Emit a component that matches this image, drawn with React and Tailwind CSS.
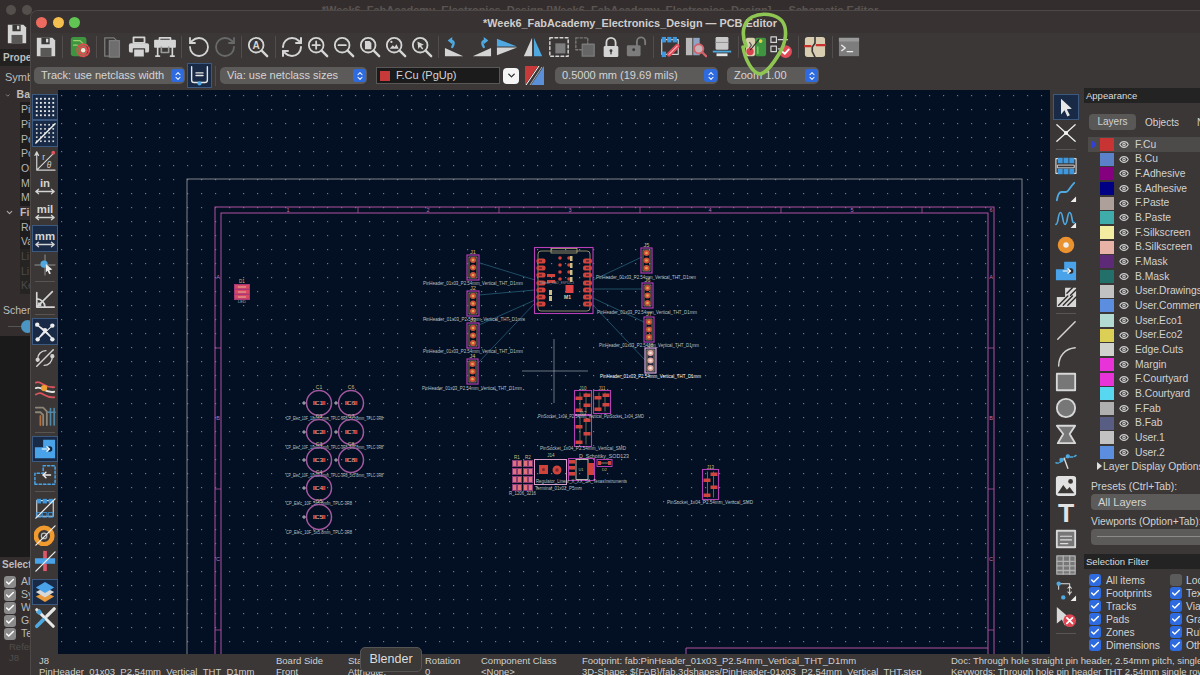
import React from 'react';
import { RotateCcw, RotateCw, RefreshCw, ChevronsUpDown, ChevronDown, Check, Eye } from 'lucide-react';

const G = '#d4d4d4';
const BLUE = '#4fa9e0';
const PINK = '#b0529f';

const Svg = ({ children, size = 22, sw = 2, stroke = G }) => (
  <svg width={size} height={size} viewBox="0 0 24 24" fill="none" stroke={stroke} strokeWidth={sw} strokeLinecap="round" strokeLinejoin="round">{children}</svg>
);

const Lens = ({ children }) => (
  <Svg>
    <circle cx="10" cy="10" r="8" />
    <path d="M16 16l6 6" strokeWidth="2.6" />
    {children}
  </Svg>
);

const topIcons = {
  save: <Svg stroke="none"><path d="M2 2h17l3 3v17H2z" fill={G} /><rect x="7" y="2" width="9" height="7" fill="#3b3938" /><rect x="12" y="3" width="2.5" height="4" fill={G} /><rect x="6" y="13" width="12" height="9" fill="#5a5856" /></Svg>,
  setup: <Svg stroke="none"><rect x="2" y="1" width="17" height="21" rx="3" fill="#3f9440" /><path d="M5 5h7l3 3M5 10h4" stroke="#9bd06a" strokeWidth="1.4" /><circle cx="15.5" cy="15.5" r="6.6" stroke="#e24b52" strokeWidth="2" strokeDasharray="2.2 1.9" /><circle cx="15.5" cy="15.5" r="4" stroke="#e24b52" strokeWidth="2.2" /><circle cx="15.5" cy="15.5" r="2.4" fill="#f6e8dc" /></Svg>,
  page: <Svg stroke="#7c7c7c" sw={1.4}><path d="M3 2h10l3 3v17H3z" /><path d="M8 5h11v18H8z" fill="#6e6e6e" /></Svg>,
  print: <Svg stroke="none"><rect x="6" y="1.5" width="12" height="6" fill="none" stroke={G} strokeWidth="2" /><rect x="1" y="8" width="22" height="10" rx="2" fill={G} /><rect x="6" y="14" width="12" height="9" fill={G} stroke="#3b3938" strokeWidth="1.5" /></Svg>,
  plot: <Svg sw={1.8}><rect x="1" y="5" width="22" height="7" fill={G} /><path d="M6 5V2h12v3" /><path d="M4 12v10M20 12v10M2 22h4M18 22h4" /><path d="M8 12v6h8v-6" stroke="#9a9a9a" /></Svg>,
  undo: <RotateCcw size={24} color={G} strokeWidth={1.8} />,
  redo: <RotateCw size={24} color="#696969" strokeWidth={1.8} />,
  find: <Lens><text x="10" y="14" fontSize="11" fontWeight="700" textAnchor="middle" fill={G} stroke="none" fontFamily="Liberation Sans">A</text></Lens>,
  refresh: <RefreshCw size={24} color={G} strokeWidth={2} />,
  zin: <Lens><path d="M10 6v8M6 10h8" /></Lens>,
  zout: <Lens><path d="M6 10h8" /></Lens>,
  zfit: <Lens><path d="M6.5 5.5h5l2 2v7h-7z" fill={G} stroke="none" /></Lens>,
  zobj: <Lens><path d="M5 14l3.5-4 2 2 2-3 2.5 5z" fill={G} stroke="none" /><circle cx="7" cy="6.5" r="1.2" fill={G} stroke="none" /></Lens>,
  zsel: <Lens><path d="M7 6l7 3.5-3 1.2 2.4 3-1.2 1-2.4-3-1.8 2.4z" fill={G} stroke="none" /></Lens>,
  flipl: <Svg stroke="none"><path d="M1 22V13l20 9z" fill={G} /><path d="M9 12c3-5 1-7-2-7" stroke={BLUE} strokeWidth="2.6" /><path d="M9 1L4 5l5 4z" fill={BLUE} /></Svg>,
  flipr: <Svg stroke="none"><path d="M23 22V13L3 22z" fill={G} /><path d="M15 12c-3-5-1-7 2-7" stroke={BLUE} strokeWidth="2.6" /><path d="M15 1l5 4-5 4z" fill={BLUE} /></Svg>,
  mirh: <Svg stroke="none"><path d="M1 3l22 8.5H1z" fill={BLUE} /><path d="M1 21l22-8.5H1z" fill={G} /></Svg>,
  mirv: <Svg stroke="none"><path d="M11 2L2 22h9z" fill={G} /><path d="M13 2l9 20h-9z" fill={BLUE} /></Svg>,
  group: <Svg sw={1.6}><rect x="2" y="2" width="20" height="20" strokeDasharray="3 2.6" /><rect x="8" y="8" width="11" height="11" fill="#7e7e7e" stroke="none" /></Svg>,
  ungroup: <Svg stroke="#7a7a7a" sw={1.5}><rect x="2" y="2" width="13" height="13" strokeDasharray="2.6 2" /><rect x="9" y="9" width="13" height="13" fill="#666" /></Svg>,
  lock: <Svg stroke="none"><path d="M7 11V7a5 5 0 0 1 10 0v4" stroke={G} strokeWidth="2" /><rect x="4" y="11" width="16" height="12" rx="1.5" fill={G} /><circle cx="12" cy="16" r="1.6" fill="#3b3938" /><rect x="11.3" y="16" width="1.4" height="4" fill="#3b3938" /></Svg>,
  unlock: <Svg stroke="none"><path d="M13 10V6a4.5 4.5 0 0 1 9 0v3" stroke="#7c7c7c" strokeWidth="2" /><rect x="2" y="10" width="15" height="12" rx="1.5" fill="#7c7c7c" /><circle cx="9.5" cy="15" r="1.6" fill="#3b3938" /></Svg>,
  fpedit: <Svg stroke="none"><path d="M3 4v16h18V4z" fill="none" stroke={G} strokeWidth="1.3" /><g fill="#3f97dd"><rect x="3" y="1" width="4.6" height="6" /><rect x="9" y="1" width="4.6" height="6" /><rect x="15" y="1" width="4.6" height="6" /><rect x="3" y="17" width="4.6" height="6" /></g><path d="M11 20l9-9" stroke="#e34d5b" strokeWidth="5" /><path d="M11 20l9-9" stroke="#fff" strokeWidth="1" /></Svg>,
  net: <Svg stroke="none"><rect x="1" y="2" width="7" height="19" fill="#b9b9b9" /><rect x="9" y="2" width="7" height="19" fill="#8fa4c4" /><circle cx="15" cy="14" r="5" fill="#c8b4b8" stroke="#d0636b" strokeWidth="2" /><path d="M19 18l4 4" stroke="#d0636b" strokeWidth="2.6" /></Svg>,
  stack: <Svg stroke="none"><rect x="5" y="1" width="14" height="14" rx="1.5" fill="#c9c9c9" /><path d="M5 7h14" stroke="#8c8c8c" strokeWidth="1" /><rect x="2" y="16" width="20" height="2" fill={BLUE} /><rect x="6" y="19" width="12" height="3" fill="#e5e5e5" /></Svg>,
  update: <Svg stroke="none"><rect x="1" y="2" width="10" height="20" rx="2" fill="#d8cfae" /><rect x="11" y="2" width="12" height="20" rx="2" fill="#3f9440" /><circle cx="17" cy="5.5" r="2" fill="#e6cf4a" /><path d="M14 12v7" stroke="#8ccf62" strokeWidth="1.4" /><circle cx="5.5" cy="17" r="4" fill="#d9434e" /><path d="M6 15L15 4" stroke="#2b2b2b" strokeWidth="1.2" /><path d="M5 7l2 3-2 3" stroke="#555" strokeWidth="1.2" /></Svg>,
  drc: <Svg stroke="none"><rect x="1" y="1" width="6" height="6" fill="none" stroke={G} strokeWidth="1.3" /><path d="M9 4h10" stroke={G} strokeWidth="1.4" /><rect x="1" y="11" width="6" height="6" fill="none" stroke={G} strokeWidth="1.3" /><path d="M9 14h3" stroke={G} strokeWidth="1.4" /><circle cx="17" cy="17" r="7" fill="#e14b59" /><path d="M13.5 17l2.6 2.6 4.4-5" stroke="#fff" strokeWidth="2" /></Svg>,
  route: <Svg stroke="none"><rect x="1" y="1" width="22" height="22" rx="3" fill="#d8cdb0" /><path d="M12 1v7l-3 4v5l3 6" stroke="#3b3938" strokeWidth="1.8" /><path d="M14 10h9M1 11h6" stroke="#c8322e" strokeWidth="2.6" /></Svg>,
  term: <Svg stroke="none"><rect x="1" y="2" width="22" height="20" fill="#7d7d7d" /><rect x="1" y="2" width="22" height="4" fill="#9a9a9a" /><path d="M4 10l4 3-4 3M10 17h6" stroke="#eee" strokeWidth="1.4" /></Svg>,
};

const topBar = ['save', '|', 'setup', '|', 'page', 'print', 'plot', '|', 'undo', 'redo', '|', 'find', '|', 'refresh', 'zin', 'zout', 'zfit', 'zobj', 'zsel', '|', 'flipl', 'flipr', 'mirh', 'mirv', 'group', 'ungroup', 'lock', 'unlock', '|', 'fpedit', 'net', 'stack', '|', 'update', 'drc', '|', 'route', '|', 'term'];

const Unit = ({ t }) => (
  <Svg stroke="none">
    <text x="12" y="13" fontSize="12.5" fontWeight="700" textAnchor="middle" fill={G} fontFamily="Liberation Sans">{t}</text>
    <path d="M2 18h20M2 18l3-2.4M2 18l3 2.4M22 18l-3-2.4M22 18l-3 2.4" stroke={G} strokeWidth="1.4" />
  </Svg>
);

const dots = [];
for (let i = 0; i < 5; i++) for (let j = 0; j < 5; j++) dots.push([3 + i * 4.5, 3 + j * 4.5]);

const leftIcons = {
  grid: <Svg stroke="none">{dots.map(([x, y]) => <rect key={x + '-' + y} x={x - 1} y={y - 1} width="2" height="2" fill="#eee" />)}</Svg>,
  gridov: <Svg stroke="none">{dots.map(([x, y]) => <rect key={x + '-' + y} x={x - 0.9} y={y - 0.9} width="1.8" height="1.8" fill="#ddd" />)}<path d="M2 23L23 2" stroke="#eee" strokeWidth="1.6" /></Svg>,
  polar: <Svg stroke="none"><path d="M3 23V4M1 7l2-4 2 4M3 23L21 5M3 23h20" stroke={G} strokeWidth="1.3" /><circle cx="21" cy="4" r="2" fill="#e25560" /><text x="9" y="12" fontSize="9" fill={G} fontFamily="Liberation Sans">r</text><text x="14" y="21" fontSize="9" fontStyle="italic" fill={G} fontFamily="Liberation Sans">θ</text></Svg>,
  inch: <Unit t="in" />,
  mil: <Unit t="mil" />,
  mm: <Unit t="mm" />,
  cursor: <Svg stroke="none"><path d="M1 12h22M12 1v22" stroke="#9a9a9a" strokeWidth="1" /><circle cx="11" cy="11" r="4" fill={BLUE} /><path d="M13 11l7 6-3.4.6 1.8 3.6-1.8.8-1.8-3.6L13 20z" fill="#eee" /></Svg>,
  angle: <Svg sw={1.8}><path d="M3 22V6M3 22h19M3 22L20 5" /><path d="M3 13a9 9 0 0 1 9 9" /><rect x="4" y="17" width="4" height="4" fill={G} stroke="none" /></Svg>,
  rats: <Svg sw={1.2} stroke="#eee"><path d="M3 4l18 16M4 20L20 5M3 4l9 6 9 10M4 20l8-10" /><g fill="#eee" stroke="none"><circle cx="3.5" cy="4" r="2.4" /><circle cx="12" cy="10" r="2.4" /><circle cx="20" cy="5" r="2.4" /><circle cx="4" cy="20" r="2.4" /><circle cx="20" cy="20" r="2.4" /></g></Svg>,
  curved: <Svg sw={1.5}><path d="M3 21L21 3" /><path d="M4 13c0-5 4-9 9-9M20 11c0 5-4 9-9 9" /><circle cx="4" cy="14" r="1.6" fill={G} /><circle cx="20" cy="10" r="1.6" fill={G} /></Svg>,
  tracks: <Svg stroke="none"><path d="M2 5c6-3 8 6 20 5M2 18c8-5 8 4 20 3" stroke="#d9545c" strokeWidth="2" /><path d="M2 11c7-3 9 6 20 4" stroke="#e4e4e4" strokeWidth="2" /><circle cx="11" cy="11" r="3.4" fill="#f0a030" /></Svg>,
  hidden: <Svg stroke="none"><path d="M2 4h8l4 4v15M2 9h5l3 3v11" stroke="#8d8478" strokeWidth="2" /><path d="M7 23V13" stroke="#b07040" strokeWidth="2" /><path d="M15 9h8M18 5v18M22 5v18" stroke="#4f88a8" strokeWidth="1.8" /></Svg>,
  pad: <Svg stroke="none"><path d="M1 22V10h9V2h13v20z" fill="#4aa3e8" /><circle cx="17" cy="12" r="3" fill="#10243f" /><path d="M9 12h8l-3-2.4M17 12l-3 2.4" stroke="#fff" strokeWidth="1.3" /></Svg>,
  padout: <Svg sw={1.6} stroke="#4aa3e8"><path d="M1 22V10h9V2h13v20z" strokeDasharray="2.6 2.2" /><path d="M10 12h8" stroke="#eee" /><path d="M13 9l-3 3 3 3" stroke="#eee" /></Svg>,
  fpoff: <Svg stroke="none"><path d="M3 4v17h18V4z" fill="none" stroke="#ddd" strokeWidth="1.2" /><g fill="#3f97dd"><rect x="3" y="2" width="4.6" height="5" /><rect x="9.5" y="2" width="4.6" height="5" /><rect x="16" y="2" width="4.6" height="5" /></g><g fill="none" stroke="#3f97dd" strokeWidth="1"><rect x="3" y="17" width="4.6" height="5" /><rect x="9.5" y="17" width="4.6" height="5" /><rect x="16" y="17" width="4.6" height="5" /></g><path d="M2 23L23 2" stroke="#eee" strokeWidth="1.4" /></Svg>,
  viaoff: <Svg stroke="none"><circle cx="11" cy="13" r="9" stroke="#f09a30" strokeWidth="5" /><circle cx="11" cy="13" r="3" stroke="#b9b9b9" strokeWidth="1.3" /><path d="M2 23L23 2" stroke="#eee" strokeWidth="1.4" /></Svg>,
  zoneoff: <Svg stroke="none"><rect x="10" y="1" width="4" height="22" fill="#e0566a" /><rect x="1" y="9" width="22" height="6" fill="#4aa3e8" /><path d="M2 23L23 2" stroke="#eee" strokeWidth="1.4" /></Svg>,
  layers: <Svg stroke="none"><path d="M12 12l10 5-10 6-10-6z" fill="#e89a3c" /><path d="M12 7l10 5-10 6-10-6z" fill="#d8d8d8" /><path d="M12 1l10 6-10 6L2 7z" fill="#4aa3e8" /></Svg>,
  tools: <Svg stroke="none"><path d="M3 3l18 18" stroke="#e8e8e8" strokeWidth="3.4" /><path d="M22 2l-8 8" stroke="#e8e8e8" strokeWidth="3.6" /><path d="M10 14l-7 7" stroke={BLUE} strokeWidth="4" /><path d="M2 6l4-4 3 4-3 3z" fill={BLUE} /></Svg>,
};

const leftBar = [['grid', 1], ['gridov', 1], ['polar'], ['inch'], ['mil'], ['mm', 1], ['cursor'], '|', ['angle'], '|', ['rats', 1], ['curved'], '-', ['tracks'], ['hidden'], '|', ['pad', 1], ['padout'], '|', ['fpoff'], ['viaoff'], ['zoneoff'], '-', ['layers', 1], ['tools']];

const Corner = () => <path d="M23 23v-6l-6 6z" fill="#eee" stroke="none" />;

const rightIcons = {
  arrow: <Svg stroke="none" size={20}><path d="M6 2l13 12-6 .6 3.6 7.4-3 1.4-3.4-7.4L6 21z" fill="#e6e6e6" /></Svg>,
  cross: <Svg sw={1.4} stroke="#eee"><path d="M2 3l20 18M22 3L2 21" /><circle cx="12" cy="12" r="1.6" fill="#fff" /></Svg>,
  fp: <Svg stroke="none"><path d="M3 4H1v16h2M21 4h2v16h-2" fill="none" stroke="#ddd" strokeWidth="1.2" /><path d="M3 11h18v3H3z" fill="none" stroke="#ddd" strokeWidth="1" /><g fill="#3f97dd"><rect x="3" y="3" width="5.4" height="6" /><rect x="9.3" y="3" width="5.4" height="6" /><rect x="15.6" y="3" width="5.4" height="6" /><rect x="3" y="15" width="5.4" height="6" /><rect x="9.3" y="15" width="5.4" height="6" /><rect x="15.6" y="15" width="5.4" height="6" /></g></Svg>,
  route: <Svg stroke={BLUE} sw={2}><path d="M2 21c1-6 2-9 5-9h5c3 0 3-4 9-10" /><Corner /></Svg>,
  tune: <Svg stroke={BLUE} sw={1.8}><path d="M1 19c3 0 2-13 5-13s2 13 5 13 2-13 5-13 2 13 5 11" /><Corner /></Svg>,
  via: <Svg stroke="none"><circle cx="12" cy="12" r="9" fill="#ea9130" /><circle cx="12" cy="12" r="3" fill="#eee" /></Svg>,
  padb: <Svg stroke="none"><path d="M1 22V10h9V2h13v20z" fill="#4aa3e8" /><circle cx="17" cy="12" r="3" fill="#2d2a28" /><path d="M9 12h8l-3-2.4M17 12l-3 2.4" stroke="#fff" strokeWidth="1.3" /></Svg>,
  hatch: <Svg stroke="none"><path d="M2 12h9V2h12v21H2z" fill="#d8d8d8" /><path d="M4 21L14 11M9 21L19 11M14 21l9-9M13 8l6-6M17 10l6-6" stroke="#2d2a28" strokeWidth="1.5" /></Svg>,
  line: <Svg sw={1.6}><path d="M3 22L22 3" /></Svg>,
  arc: <Svg sw={1.6}><path d="M4 23C4 12 11 4 22 3" /></Svg>,
  rect: <Svg stroke="none"><rect x="2" y="3" width="20" height="18" fill="#777" stroke="#d8d8d8" strokeWidth="2" /></Svg>,
  circle: <Svg stroke="none"><circle cx="12" cy="12" r="10" fill="#777" stroke="#d8d8d8" strokeWidth="2" /></Svg>,
  poly: <Svg stroke="none"><path d="M2 3h20l-6 9 6 10H3l6-10z" fill="#777" stroke="#d8d8d8" strokeWidth="2" /></Svg>,
  bezier: <Svg stroke={BLUE} sw={1.5}><path d="M1 15c5 2 8-5 12-6s6 1 10-2" strokeDasharray="2.6 1.8" /><path d="M10 10l4 11" stroke="#ddd" /><circle cx="7" cy="12" r="1.6" fill={BLUE} /><circle cx="14" cy="8" r="1.6" fill={BLUE} /></Svg>,
  image: <Svg stroke="none"><rect x="1" y="1" width="22" height="22" rx="3" fill="#e2e2e2" /><path d="M3 20l6-9 4 5 3-3 5 7z" fill="#3a3735" /><circle cx="17" cy="7" r="2.6" fill="#3a3735" /></Svg>,
  text: <Svg stroke="none"><text x="12" y="23" fontSize="29" fontWeight="700" textAnchor="middle" fill="#e2e2e2" fontFamily="Liberation Sans">T</text></Svg>,
  box: <Svg stroke="none"><rect x="2" y="3" width="20" height="18" fill="#777" stroke="#d8d8d8" strokeWidth="2" /><path d="M6 9h12M6 13h12M6 17h8" stroke="#ddd" strokeWidth="1.3" /></Svg>,
  table: <Svg stroke="#b0b0b0" sw={1.4}><rect x="2" y="2" width="20" height="20" fill="#777" /><path d="M2 8h20M2 13h20M2 18h20M9 2v20M16 2v20" /></Svg>,
  dim: <Svg stroke="#ddd" sw={1.1}><path d="M4 4h12M16 4v12M4 4v6" /><path d="M14 9l2-2 2 2M14 13l2 2 2-2" /><circle cx="4" cy="4" r="2.4" fill={BLUE} stroke="none" /><circle cx="9" cy="19" r="2.4" fill={BLUE} stroke="none" /><path d="M23 23v-6l-6 6z" fill="#eee" stroke="none" /></Svg>,
  del: <Svg stroke="none"><path d="M2 1l14 12-6 .6 3.4 6-2.8 1.4-3.2-6.2L2 19z" fill="#d8d8d8" /><circle cx="16" cy="16" r="7" fill="#df4754" /><path d="M13 13l6 6M19 13l-6 6" stroke="#fff" strokeWidth="2" /></Svg>,
};

const rightBar = [['arrow', 1], ['cross'], '|', ['fp'], ['route'], ['tune'], ['via'], ['padb'], ['hatch'], '|', ['line'], ['arc'], ['rect'], ['circle'], ['poly'], ['bezier'], ['image'], ['text'], ['box'], ['table'], ['dim'], ['del'], '|'];

function VBar({ items, icons, className, rowClass }) {
  return (
    <div className={className}>
      {items.map((it, i) => {
        if (it === '|') return <div key={i} className="w-[20px] h-[7px] shrink-0 flex items-center"><div className="w-full h-px bg-[#575452]" /></div>;
        if (it === '-') return <div key={i} className="h-[5px] shrink-0" />;
        return (
          <div key={i} className={`w-[26px] shrink-0 flex items-center justify-center ${rowClass} ${it[1] ? 'bg-[#182a46] border border-[#3c5a80]' : ''}`}>
            {icons[it[0]]}
          </div>
        );
      })}
    </div>
  );
}

function Stepper() {
  return (
    <span className="absolute right-[1px] top-[2px] w-[13px] h-[13px] rounded-[3px] bg-[#2f6be0] flex items-center justify-center">
      <ChevronsUpDown size={10} color="#fff" strokeWidth={2.5} />
    </span>
  );
}

function Select({ w, children }) {
  return (
    <div className={`relative h-[17px] rounded-[5px] bg-[#5d5b5a] text-[#d5d5d5] text-[11px] leading-[17px] pl-[7px] ${w}`}>
      {children}
      <Stepper />
    </div>
  );
}

const sch = [
  { n: 'F.Cu', c: 'bg-[#c83434]' }, { n: 'B.Cu', c: 'bg-[#5b82c9]' }, { n: 'F.Adhesive', c: 'bg-[#84007f]' },
  { n: 'B.Adhesive', c: 'bg-[#000084]' }, { n: 'F.Paste', c: 'bg-[#ad9f9a]' }, { n: 'B.Paste', c: 'bg-[#40abab]' },
  { n: 'F.Silkscreen', c: 'bg-[#f2eda1]' }, { n: 'B.Silkscreen', c: 'bg-[#e8b2a7]' }, { n: 'F.Mask', c: 'bg-[#5d2a78]' },
  { n: 'B.Mask', c: 'bg-[#23706a]' }, { n: 'User.Drawings', c: 'bg-[#c2c2c2]' }, { n: 'User.Comments', c: 'bg-[#5c8ee0]' },
  { n: 'User.Eco1', c: 'bg-[#b4dbd2]' }, { n: 'User.Eco2', c: 'bg-[#dccf55]' }, { n: 'Edge.Cuts', c: 'bg-[#d0d2cd]' },
  { n: 'Margin', c: 'bg-[#e833d8]' }, { n: 'F.Courtyard', c: 'bg-[#e833d8]' }, { n: 'B.Courtyard', c: 'bg-[#58d8f0]' },
  { n: 'F.Fab', c: 'bg-[#afafaf]' }, { n: 'B.Fab', c: 'bg-[#585d84]' }, { n: 'User.1', c: 'bg-[#c2c2c2]' }, { n: 'User.2', c: 'bg-[#5c8ee0]' },
];

const filters = [['All items', 'Loc', false], ['Footprints', 'Tex', true], ['Tracks', 'Via', true], ['Pads', 'Gra', true], ['Zones', 'Rul', true], ['Dimensions', 'Oth', true]];

const CheckBox = ({ on = true, gray = false }) => (
  <span className={`w-[12px] h-[12px] rounded-[3px] flex items-center justify-center shrink-0 ${on ? (gray ? 'bg-[#8a8a8a]' : 'bg-[#2f6be0]') : 'bg-[#5b5b5b]'}`}>
    {on && <Check size={10} color="#fff" strokeWidth={3.5} />}
  </span>
);

function Panels() {
  return (
    <div className="flex-1 min-w-0 overflow-hidden flex flex-col text-[#d2d2d2] text-[10.3px] pl-[3px] -mt-[2px]">
      <div className="h-[15px] bg-[#232323] pl-[2px] leading-[15px] text-[9.5px] text-[#dcdcdc] shrink-0">Appearance</div>
      <div className="flex items-center h-[16px] mt-[11px] ml-[5px] shrink-0 text-[10px]">
        <div className="w-[47px] h-full shrink-0 rounded-[4px] bg-[#5a5856] text-center leading-[16px]">Layers</div>
        <div className="w-[52px] shrink-0 text-center">Objects</div>
        <div className="ml-[9px] shrink-0">Nets</div>
      </div>
      <div className="mt-[7px] shrink-0">
        {sch.map((l, i) => (
          <div key={l.n} className={`h-[14.68px] flex items-center ml-[4px] relative ${i === 0 ? 'bg-[#4d4b4a]' : ''}`}>
            {i === 0 && <span className="absolute left-[3px] w-[4px] h-[7px] bg-[#3340d8] rounded-r-[3px]" />}
            <span className={`ml-[12px] w-[14px] h-[13px] shrink-0 ${l.c}`} />
            <span className="ml-[5px] w-[10px] flex justify-center"><Eye size={11} color="#cfcfcf" strokeWidth={2.8} /></span>
            <span className="ml-[6px] whitespace-nowrap">{l.n}</span>
          </div>
        ))}
      </div>
      <div className="h-[13px] flex items-center ml-[13px] whitespace-nowrap shrink-0">
        <span className="w-0 h-0 border-y-[4px] border-y-transparent border-l-[5px] border-l-[#e0e0e0] mr-[1px]" />
        Layer Display Options
      </div>
      <div className="h-[13px] mt-[7px] ml-[7px] leading-[13px] whitespace-nowrap shrink-0">Presets (Ctrl+Tab):</div>
      <div className="h-[16px] ml-[7px] mt-[1px] bg-[#5d5b5a] rounded-l-[4px] pl-[7px] leading-[16px] shrink-0 text-[11px]">All Layers</div>
      <div className="h-[13px] mt-[5px] ml-[7px] leading-[13px] whitespace-nowrap shrink-0">Viewports (Option+Tab):</div>
      <div className="h-[16px] ml-[7px] mt-[1px] bg-[#5d5b5a] rounded-l-[4px] pl-[6px] flex items-center shrink-0"><div className="w-full h-px bg-[#8a8a8a]" /></div>
      <div className="h-[15px] mt-[9px] bg-[#232323] pl-[2px] leading-[15px] text-[9.5px] text-[#dcdcdc] shrink-0">Selection Filter</div>
      <div className="mt-[5px] grid grid-cols-[81px_1fr] ml-[5px]">
        {filters.map(([a, b, on]) => (
          <React.Fragment key={a}>
            <div className="h-[13px] flex items-center gap-[5px] whitespace-nowrap"><CheckBox /><span>{a}</span></div>
            <div className="h-[13px] flex items-center gap-[4px] whitespace-nowrap"><CheckBox on={on} /><span>{b}</span></div>
          </React.Fragment>
        ))}
      </div>
    </div>
  );
}

// PCB drawing, in page coordinates
const LABEL = '#b8c2c8';

const Lbl = ({ x, y, w, t, c = LABEL, s = 5.4 }) => (
  <text x={x} y={y} textLength={w} lengthAdjust="spacingAndGlyphs" fontSize={s} fill={c} fontFamily="Liberation Sans">{t}</text>
);

function Header({ x, y, w, lx, lw, ly, name, sel }) {
  const court = sel ? '#d8a8d8' : '#b23fb4';
  return (
    <g>
      <rect x={x} y={y} width={w} height="25" fill={sel ? '#2a2a44' : 'none'} stroke={court} strokeWidth="1.2" />
      <rect x={x + 2} y={y + 2} width={w - 4} height="21" fill="none" stroke="#cbbf86" strokeWidth="0.6" />
      {[0, 1, 2].map((i) => (
        <g key={i}>
          <circle cx={x + w / 2} cy={y + 5 + i * 7.5} r="3" fill={sel ? '#e0a8a0' : '#cf4f3a'} />
          <circle cx={x + w / 2} cy={y + 5 + i * 7.5} r="1.3" fill={sel ? '#f0e8d8' : '#dca84e'} />
        </g>
      ))}
      <Lbl x={x + w / 2 - 3} y={y - 1.5} w={6} t={name} c="#cbbf86" s={4.5} />
      <Lbl x={lx} y={ly} w={lw} t="PinHeader_01x03_P2.54mm_Vertical_THT_D1mm" c={sel ? '#ffffff' : LABEL} />
    </g>
  );
}

function Socket({ x, y, w, h, name }) {
  return (
    <g>
      <rect x={x} y={y} width={w} height={h} fill="none" stroke="#b23fb4" strokeWidth="1.1" />
      <path d={`M${x + w / 2 - 3} ${y + 2}V${y + h - 2}M${x + w / 2 + 3} ${y + 2}V${y + h - 2}`} stroke="#cbbf86" strokeWidth="0.5" />
      <g fill="#d0453e">
        <rect x={x + w - 8} y={y + 3} width="7" height="3.5" />
        <rect x={x + 1} y={y + h / 2 - 6} width="7" height="3.5" />
        <rect x={x + w - 8} y={y + h / 2 + 1} width="7" height="3.5" />
        <rect x={x + 1} y={y + h - 6} width="7" height="3.5" />
      </g>
      <text x={x + w / 2} y={y - 1} fontSize="4.5" textAnchor="middle" fill="#cbbf86" fontFamily="Liberation Sans">{name}</text>
    </g>
  );
}

function Cap({ x, y, name, top, w, label }) {
  return (
    <g>
      <circle cx={x} cy={y} r="12.5" fill="none" stroke="#a2589f" strokeWidth="1.5" />
      <rect x={x - 6} y={y - 2} width="3.5" height="4" fill="#b83a3a" />
      <rect x={x + 3} y={y - 2} width="3.5" height="4" fill="#b83a3a" />
      <text x={x} y={y + 2} fontSize="6" textAnchor="middle" fill="#d8b8b0" fontFamily="Liberation Sans">{name}</text>
      <path d={`M${x - 17} ${y}h4M${x - 15} ${y - 2}v4`} stroke="#e0e0e0" strokeWidth="0.8" />
      <text x={x} y={y - 14} fontSize="5" textAnchor="middle" fill="#cbbf86" fontFamily="Liberation Sans">{top}</text>
      {label && <Lbl x={x - 33} y={y + 16.5} w={w} t={label} />}
    </g>
  );
}

const ratsnest = [[480, 263, 535, 280], [479, 295, 535, 290], [479, 325, 535, 300], [478, 363, 535, 303], [642, 257, 593, 280], [642, 289, 593, 289], [644, 322, 593, 298], [645, 360, 593, 305]];
const headers = [
  { x: 467, y: 255, w: 12, lx: 423, lw: 100, ly: 285, name: 'J1' }, { x: 467, y: 291, w: 12, lx: 423, lw: 102, ly: 321, name: 'J2' },
  { x: 467, y: 323, w: 12, lx: 423, lw: 100, ly: 353, name: 'J3' }, { x: 467, y: 359, w: 11, lx: 422, lw: 100, ly: 390, name: 'J4' },
  { x: 641, y: 248, w: 11, lx: 596, lw: 100, ly: 279, name: 'J5' }, { x: 642, y: 283, w: 11, lx: 597, lw: 100, ly: 314, name: 'J6' },
  { x: 644, y: 317, w: 10, lx: 599, lw: 100, ly: 347, name: 'J7' }, { x: 645, y: 348, w: 11, lx: 600, lw: 101, ly: 378, name: 'J8', sel: true },
];
const capRows = [[403, 'C1', 'C6', 97], [432, 'C2', 'C7', 97], [460, 'C3', 'C8', 97], [488, 'C4', '', 66], [517, 'C5', '', 66]];
const railY = [261, 268, 275, 283, 290, 297, 304];

function PcbCanvas() {
  return (
    <svg className="w-[992px] h-[564px] shrink-0" viewBox="58 90 992 564" xmlns="http://www.w3.org/2000/svg">
      <defs>
        <pattern id="dots" x="5" y="11" width="14" height="14" patternUnits="userSpaceOnUse">
          <rect width="1.2" height="1.2" fill="#6a7a8a" />
        </pattern>
      </defs>
      <rect x="58" y="90" width="992" height="564" fill="#030f22" />
      <rect x="58" y="90" width="992" height="564" fill="url(#dots)" />

      <rect x="187" y="179" width="835" height="540" fill="none" stroke="#8d9094" strokeWidth="0.9" />
      <rect x="215" y="207" width="779" height="500" fill="none" stroke={PINK} strokeWidth="1" />
      <rect x="221" y="213" width="767" height="490" fill="none" stroke={PINK} strokeWidth="1" />
      <path d="M686 703V648H988" fill="none" stroke={PINK} strokeWidth="1" />
      {[358, 499, 640, 781, 922].map((x) => <path key={x} d={`M${x} 207v6`} stroke={PINK} strokeWidth="0.8" />)}
      {[348, 489, 630].map((y) => <path key={y} d={`M215 ${y}h6M988 ${y}h6`} stroke={PINK} strokeWidth="0.8" />)}
      {[['1', 288], ['2', 428], ['3', 570], ['4', 710], ['5', 852], ['6', 991]].map(([t, x]) => (
        <text key={t} x={x} y="212" fontSize="5.5" textAnchor="middle" fill="#c070b8" fontFamily="Liberation Sans">{t}</text>
      ))}
      {[['A', 279], ['B', 420], ['C', 561]].map(([t, y]) => (
        <g key={t} fontSize="5.5" textAnchor="middle" fill="#c070b8" fontFamily="Liberation Sans">
          <text x="218" y={y}>{t}</text>
          <text x="991" y={y}>{t}</text>
        </g>
      ))}

      {ratsnest.map(([a, b, c, d]) => <line key={a + '-' + b} x1={a} y1={b} x2={c} y2={d} stroke="#24566e" strokeWidth="0.9" />)}

      {/* D1 */}
      <rect x="234" y="284" width="16" height="16" fill="#a8387a" />
      <g fill="#d84860"><rect x="235" y="285" width="14" height="3.6" /><rect x="235" y="290" width="14" height="3.6" /><rect x="235" y="295" width="14" height="3.6" /></g>
      <path d="M238 287h8M238 292h8M238 297h8" stroke="#e8d0a8" strokeWidth="0.8" />
      <text x="242" y="283" fontSize="4.5" textAnchor="middle" fill="#cbbf86" fontFamily="Liberation Sans">D1</text>
      <text x="242" y="303" fontSize="4" textAnchor="middle" fill="#a7b2ba" fontFamily="Liberation Sans">LED</text>

      {/* XIAO module */}
      <rect x="534.5" y="247.5" width="58.5" height="66" fill="none" stroke="#b93fb8" strokeWidth="1.1" />
      <rect x="538" y="251" width="52" height="60" rx="3" fill="none" stroke="#cbbf86" strokeWidth="0.7" />
      <rect x="551" y="248.5" width="26" height="4.5" fill="none" stroke="#cbbf86" strokeWidth="0.7" />
      {railY.map((y) => (
        <g key={y} fill="#d0443c">
          <rect x="536.5" y={y - 2.6} width="9" height="5.2" rx="2.2" />
          <rect x="583" y={y - 2.6} width="9" height="5.2" rx="2.2" />
          <rect x="539" y={y - 1} width="3" height="2" fill="#7a2a30" />
          <rect x="586" y={y - 1} width="3" height="2" fill="#7a2a30" />
        </g>
      ))}
      <g fill="#d0443c">
        {[258, 265, 272, 279].map((y) => <circle key={y} cx="560" cy={y} r="1.8" />)}
        {[258, 265, 272, 279].map((y) => <circle key={y} cx="569" cy={y} r="1.8" />)}
        <rect x="547" y="274" width="8" height="3" />
        <rect x="547" y="280" width="8" height="3" />
        <rect x="565.5" y="285" width="8" height="8" fill="#e04648" />
      </g>
      <g fill="#cbbf86">
        <rect x="570" y="256" width="2.5" height="5" /><rect x="570" y="263" width="2.5" height="5" /><rect x="570" y="270" width="2.5" height="5" /><rect x="570" y="277" width="2.5" height="5" />
        <rect x="549" y="290" width="3" height="5" /><rect x="549" y="296" width="3" height="5" />
      </g>
      <Lbl x={540} y={284} w={34} t="Module_XIAO_ESP32C3" c="#8f98a0" s={4} />
      <text x="564" y="299" fontSize="5" fontWeight="700" fill="#e0d8a8" fontFamily="Liberation Sans">M1</text>

      {headers.map((h) => <Header key={h.name} {...h} />)}

      {/* crosshair */}
      <path d="M554 339V403M522 371H588" stroke="#98a3ad" strokeWidth="0.7" />

      {capRows.map(([y, a, b, w]) => (
        <g key={a}>
          <Cap x={319} y={y} name={a} top={a} w={w} label={b ? 'CP_Elec_10F_10x10.5mm_TPLC-3R8_5x5.8mm_TPLC-3R8' : 'CP_Elec_10F_5x5.8mm_TPLC-3R8'} />
          {b && <Cap x={351} y={y} name={b} top={b} w={0} label="" />}
        </g>
      ))}

      <Socket x={574.5} y={390.5} w={17} h={24} name="J10" />
      <Socket x={593.5} y={390.5} w={17} h={23} name="J11" />
      <Socket x={574.5} y={415.5} w={17} h={31} name="J12" />
      <Socket x={702.5} y={469.5} w={16} h={30} name="J13" />
      <Lbl x={538} y={418} w={106} t="PinSocket_1x04_P2.54mm_Vertical_PinSocket_1x04_SMD" />
      <Lbl x={540} y={450} w={86} t="PinSocket_1x04_P2.54mm_Vertical_SMD" />
      <Lbl x={667} y={504} w={86} t="PinSocket_1x04_P2.54mm_Vertical_SMD" />

      {/* resistor stacks */}
      {[516, 527].map((x) => (
        <g key={x}>
          <text x={x + 1} y="459" fontSize="4.5" textAnchor="middle" fill="#cbbf86" fontFamily="Liberation Sans">{x === 516 ? 'R1' : 'R2'}</text>
          {[463, 471, 479, 487].map((y) => (
            <g key={y}>
              <rect x={x - 4} y={y - 3} width="10" height="7" fill="#8a3a74" />
              <rect x={x - 3} y={y - 2} width="3" height="5" fill="#e0707a" />
              <rect x={x + 2} y={y - 2} width="3" height="5" fill="#e0707a" />
            </g>
          ))}
        </g>
      ))}
      <Lbl x={509} y={495} w={27} t="R_1206_3216" />

      {/* terminal */}
      <rect x="534.5" y="459.5" width="32" height="25" fill="none" stroke="#d8a0c8" strokeWidth="1" />
      <rect x="539" y="465" width="9" height="9" fill="#d0443c" />
      <circle cx="557" cy="470" r="4.5" fill="#d0443c" />
      <circle cx="543.5" cy="469.5" r="1.5" fill="#7a2a30" />
      <circle cx="557" cy="470" r="1.7" fill="#7a2a30" />
      <text x="551" y="457" fontSize="4.5" textAnchor="middle" fill="#cbbf86" fontFamily="Liberation Sans">J14</text>

      {/* regulator */}
      <rect x="568.5" y="458.5" width="26" height="22" fill="none" stroke="#b23fb4" strokeWidth="1" />
      <rect x="576" y="459.5" width="12" height="20" fill="none" stroke="#e6e0c8" strokeWidth="0.8" />
      <g fill="#d0443c">
        <rect x="569" y="460" width="6" height="3.6" /><rect x="569" y="466" width="6" height="3.6" /><rect x="569" y="472" width="6" height="3.6" />
        <rect x="588" y="463" width="6" height="12" />
      </g>
      <text x="581" y="471" fontSize="4" textAnchor="middle" fill="#cbbf86" fontFamily="Liberation Sans">U1</text>

      {/* diode */}
      <rect x="597" y="459.5" width="15" height="7" fill="none" stroke="#b23fb4" strokeWidth="1" />
      <rect x="598" y="461" width="3" height="4" fill="#d0443c" />
      <rect x="608" y="461" width="3" height="4" fill="#d0443c" />
      <path d="M601 463h7" stroke="#cbbf86" strokeWidth="0.7" />
      <text x="604.5" y="471" fontSize="4" textAnchor="middle" fill="#cbbf86" fontFamily="Liberation Sans">D2</text>

      <Lbl x={579} y={458} w={50} t="D_Schottky_SOD123" />
      <Lbl x={536} y={483} w={91} t="Regulator_Linear_X_XX_SA_TexasInstruments" />
      <Lbl x={535} y={490} w={47} t="Terminal_01x02_P5mm" />
    </svg>
  );
}

function BackWindow() {
  const rows = [['Ba', 'h'], ['Pi'], ['Pi'], ['Po'], ['Po'], ['Or'], ['Mi'], ['Mi'], ['Fi', 'h'], ['Re'], ['Va'], ['Li', 'd'], ['Li', 'd'], ['Ke', 'd']];
  return (
    <div className="absolute inset-0 bg-[#332e2d] text-[#bdbdbd] text-[10.5px]">
      <div className="h-[21px] relative">
        <span className="absolute left-[6px] top-[5px] w-[10px] h-[10px] rounded-full bg-[#544f4d]" />
        <span className="absolute left-[22px] top-[5px] w-[10px] h-[10px] rounded-full bg-[#544f4d]" />
        <div className="pt-[2px] text-center text-[11px] font-bold text-[#5b5452] whitespace-nowrap">*Week6_FabAcademy_Electronics_Design [Week6_FabAcademy_Electronics_Design] — Schematic Editor</div>
      </div>
      <div className="w-[30px] overflow-hidden">
        <div className="h-[26px] pl-[6px] flex items-center">{topIcons.save}</div>
        <div className="h-[17px] mt-[2px] bg-[#232120] pl-[3px] leading-[17px] font-bold text-[10px] whitespace-nowrap">Properties</div>
        <div className="h-[14px] mt-[4px] pl-[5px] leading-[14px] text-[11px]">Symbol</div>
        <div className="mt-[4px]">
          {rows.map(([t, k], i) => (
            <div key={i} className={`h-[14.7px] flex items-center ${k === 'h' ? 'pl-[5px] gap-[6px]' : 'pl-[20px]'}`}>
              {k === 'h' && <ChevronDown size={9} color="#aaa" strokeWidth={3} />}
              <span className={k === 'h' ? 'font-bold' : `w-full pl-[1px] ${k === 'd' ? 'bg-[#262423] text-[#4c4a49]' : 'bg-[#1e1c1c] text-[#b5b5b5]'}`}>{t}</span>
            </div>
          ))}
        </div>
        <div className="h-[15px] mt-[9px] pl-[3px] leading-[15px] whitespace-nowrap">Schematic</div>
        <div className="h-[18px] relative flex items-center"><div className="w-full h-px ml-[8px] bg-[#555]" /><span className="absolute left-[21px] top-[2px] w-[13px] h-[13px] rounded-full bg-[#4a95c4]" /></div>
        <div className="h-[221px] bg-[#1b1a1a]" />
        <div className="h-[16px] pl-[2px] leading-[16px] font-bold text-[10px]">Selection</div>
        <div className="pt-[3px] pl-[4px] text-[#bbb] h-[68px]">
          {['Al', 'Sy', 'W', 'Gr', 'Te'].map((t) => (
            <div key={t} className="h-[13px] flex items-center gap-[5px]"><CheckBox gray /><span>{t}</span></div>
          ))}
        </div>
        <div className="pl-[9px] text-[#4f4d4c] text-[9.5px] leading-[11px]">Refer<br />J8</div>
      </div>
    </div>
  );
}

function StatusCol({ w, a, b }) {
  return (
    <div className={`shrink-0 whitespace-nowrap ${w}`}>
      <div>{a}</div>
      <div>{b}</div>
    </div>
  );
}

function FrontWindow() {
  return (
    <div className="absolute left-[30px] top-[10px] w-[1170px] h-[665px] flex flex-col bg-[#3a3736] border-t border-l border-[#4c4948] rounded-tl-[8px] overflow-hidden">
      <div className="h-[22px] shrink-0 bg-[#383332] relative">
        <div className="absolute left-[5px] top-[6px] flex gap-[5.5px]">
          <span className="w-[11px] h-[11px] rounded-full bg-[#ec6a5e]" />
          <span className="w-[11px] h-[11px] rounded-full bg-[#f4bf4f]" />
          <span className="w-[11px] h-[11px] rounded-full bg-[#61c554]" />
        </div>
        <div className="pl-[452px] pt-[4px] text-[10.9px] font-bold text-[#cfcdcc] whitespace-nowrap">*Week6_FabAcademy_Electronics_Design — PCB Editor</div>
      </div>

      <div className="h-[28px] shrink-0 flex items-center pl-[2px]">
        {topBar.map((k, i) => (k === '|'
          ? <div key={i} className="w-[7.8px] h-[22px] flex justify-center"><div className="w-px h-full bg-[#504d4c]" /></div>
          : <div key={i} className="w-[25.9px] h-[26px] flex items-center justify-center">{topIcons[k]}</div>))}
      </div>

      <div className="h-[29px] shrink-0 flex items-center pl-[3px]">
        <Select w="w-[151px]">Track: use netclass width</Select>
        <div className="ml-[2px] w-[25px] h-[25px] bg-[#182a46] border border-[#3c5a80] flex items-center justify-center">
          <Svg size={21} stroke="#e6e6e6" sw={1.6}>
            <path d="M3 2v15c0 2 1 3 3 3h12c2 0 3-1 3-3V2" />
            <path d="M8 9h8M8 12h8" />
            <circle cx="12" cy="21" r="2.4" fill={BLUE} stroke="none" />
          </Svg>
        </div>
        <div className="w-px h-[20px] ml-[3px] bg-[#504d4c]" />
        <div className="ml-[4px]"><Select w="w-[147px]">Via: use netclass sizes</Select></div>
        <div className="ml-[9px] w-[124px] h-[17px] bg-[#1c1b1b] border border-[#5a5857] flex items-center text-[11px] text-[#d5d5d5]">
          <span className="ml-[3px] w-[10px] h-[10px] bg-[#c83a3a] mr-[6px]" />F.Cu (PgUp)
        </div>
        <div className="ml-[3px] w-[16px] h-[16px] rounded-[4px] bg-[#f5f5f5] flex items-center justify-center"><ChevronDown size={11} color="#333" strokeWidth={3} /></div>
        <div className="ml-[6px] w-[19px] h-[19px] flex items-center justify-center">
          <svg width="19" height="19" viewBox="0 0 19 19"><path d="M0 0h13L0 19z" fill="#c83a3a" /><path d="M19 0v19H6z" fill="#5b8fd8" /><path d="M14 0L1 19" stroke="#fff" strokeWidth="1" /><path d="M17 1L5 19" stroke="#fff" strokeWidth="0.6" /></svg>
        </div>
        <div className="ml-[11px]"><Select w="w-[163px]">0.5000 mm (19.69 mils)</Select></div>
        <div className="ml-[9px]"><Select w="w-[92px]">Zoom 1.00</Select></div>
      </div>

      <div className="flex-1 min-h-0 flex">
        <VBar items={leftBar} icons={leftIcons} rowClass="h-[26.3px]" className="w-[27px] shrink-0 flex flex-col items-center pt-[4px]" />
        <PcbCanvas />
        <VBar items={rightBar} icons={rightIcons} rowClass="h-[26.1px]" className="w-[31px] shrink-0 flex flex-col items-center pt-[4px]" />
        <Panels />
      </div>

      <div className="h-[21px] shrink-0 flex pl-[8px] pt-[2px] text-[9.5px] leading-[10.5px] text-[#cfcfcf]">
        <StatusCol w="w-[237px]" a="J8" b="PinHeader_01x03_P2.54mm_Vertical_THT_D1mm" />
        <StatusCol w="w-[72px]" a="Board Side" b="Front" />
        <StatusCol w="w-[77px]" a="Status" b="Attribute:" />
        <StatusCol w="w-[56px]" a="Rotation" b="0" />
        <StatusCol w="w-[101px]" a="Component Class" b="<None>" />
        <StatusCol w="w-[369px]" a="Footprint: fab:PinHeader_01x03_P2.54mm_Vertical_THT_D1mm" b="3D-Shape: ${FAB}/fab.3dshapes/PinHeader-01x03_P2.54mm_Vertical_THT.step" />
        <StatusCol w="w-[300px]" a="Doc: Through hole straight pin header, 2.54mm pitch, single row" b="Keywords: Through hole pin header THT 2.54mm single row" />
      </div>
    </div>
  );
}

export default function App() {
  return (
    <div className="relative w-[1200px] h-[675px] overflow-hidden font-['Liberation_Sans',Arial,sans-serif]">
      <BackWindow />
      <FrontWindow />

      {/* dock tooltip */}
      <div className="absolute left-[360px] top-[647px] w-[62px] h-[25px] rounded-[5px] bg-[#3b3938] border border-[#555] text-center text-[12.5px] leading-[22px] text-[#dedede]">Blender</div>

      {/* green hand-drawn marker */}
      <svg className="absolute left-0 top-0 pointer-events-none" width="1200" height="100" viewBox="0 0 1200 100">
        <path d="M746 46C741 34 743 22 752 17C762 12 776 14 782 21C788 29 786 43 779 54C773 64 766 73 760 74C752 73 745 59 743 47" fill="none" stroke="#8fc653" strokeWidth="3.6" strokeLinecap="round" />
      </svg>
    </div>
  );
}
